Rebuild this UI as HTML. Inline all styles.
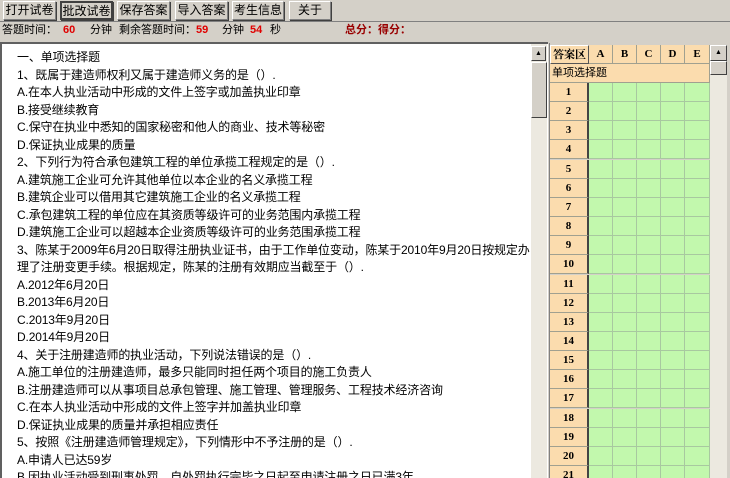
<!DOCTYPE html>
<html style="overflow:hidden;width:730px;height:478px"><head><meta charset="utf-8"><style>
*{margin:0;padding:0;box-sizing:border-box}
body{width:730px;height:478px;overflow:hidden;background:#d4d0c8;font-family:"Liberation Sans","Noto Sans CJK SC","WenQuanYi Zen Hei",sans-serif;font-size:12px;position:relative;color:#000}
.btn{position:absolute;top:1px;height:19px;border:1px solid #808080;border-top-color:#fff;border-left-color:#fff;box-shadow:1px 1px 0 #404040;text-align:center;line-height:17px;font-size:12px}
.btn.p{border:2px solid #404040}
.st{position:absolute;top:21px;left:0;width:730px;height:17px;border-top:1px solid #808080;line-height:16px;font-size:11px}
.st span{position:absolute;top:0}
.r{color:#e00000;font-weight:bold}
.dr{color:#900;font-weight:bold}
#txt{position:absolute;left:0;top:42px;width:548px;height:436px;background:#fff;border-top:2px solid #606060;border-left:2px solid #606060;overflow:hidden}
#txt .l{position:absolute;left:15px;white-space:nowrap;font-size:12px;line-height:14px;letter-spacing:-0.15px}
.sb{position:absolute;background:#ece9e0;}
.arr{position:absolute;width:15px;height:15px;background:#d4d0c8;border:1px solid #fff;border-right-color:#404040;border-bottom-color:#404040;font-size:7px;text-align:center;line-height:13px}
.thumb{position:absolute;background:#d4d0c8;border:1px solid #fff;border-right-color:#404040;border-bottom-color:#404040}
#grid{position:absolute;left:549px;top:43px;width:181px;height:435px;background:#d4d0c8;border-left:1px solid #808080;overflow:hidden}
.c{position:absolute;border-right:1px solid #a0a090;border-bottom:1px solid #a0a090}
.h{background:#fbdcae;font-family:"Liberation Serif","Noto Serif CJK SC",serif;font-weight:bold;text-align:center;font-size:11px}
.g{background:#c2f8ad;border-color:#a8c8a0}
</style></head><body>
<div class="btn" style="left:3px;width:53px">打开试卷</div>
<div class="btn p" style="left:60px;width:53px">批改试卷</div>
<div class="btn" style="left:117px;width:53px">保存答案</div>
<div class="btn" style="left:175px;width:53px">导入答案</div>
<div class="btn" style="left:232px;width:52px">考生信息</div>
<div class="btn" style="left:289px;width:42px">关于</div>
<div class="st">
<span style="left:2px">答题时间：</span><span class="r" style="left:63px">60</span><span style="left:90px">分钟</span><span style="left:119px">剩余答题时间：</span><span class="r" style="left:196px">59</span><span style="left:222px">分钟</span><span class="r" style="left:250px">54</span><span style="left:270px">秒</span><span class="dr" style="left:345px">总分：得分：</span>
</div>
<div id="txt">
<div id="lines"></div>
<div class="sb" style="left:529px;top:0;width:16px;height:436px"></div>
<div class="arr" style="left:529px;top:2px">▲</div>
<div class="thumb" style="left:529px;top:18px;width:16px;height:56px"></div>
</div>
<div id="grid">
<div class="c h" style="left:0;top:2px;width:39px;height:19px;line-height:18px;border:1px solid #555;border-top-color:#fff;border-left-color:#fff">答案区</div>
<div class="c h" style="left:39px;top:2px;width:24px;height:19px;line-height:18px">A</div>
<div class="c h" style="left:63px;top:2px;width:24px;height:19px;line-height:18px">B</div>
<div class="c h" style="left:87px;top:2px;width:24px;height:19px;line-height:18px">C</div>
<div class="c h" style="left:111px;top:2px;width:24px;height:19px;line-height:18px">D</div>
<div class="c h" style="left:135px;top:2px;width:25px;height:19px;line-height:18px">E</div>
<div class="c h" style="left:0;top:21px;width:160px;height:19px;line-height:18px;text-align:left;font-weight:normal;font-family:'Liberation Sans','Noto Sans CJK SC',sans-serif;padding-left:2px">单项选择题</div>
<div id="rows"></div>
<div class="sb" style="left:160px;top:2px;width:17px;height:433px"></div>
<div class="arr" style="left:160px;top:2px;width:17px;height:16px">▲</div>
<div class="thumb" style="left:160px;top:18px;width:17px;height:14px"></div>
</div>
<script>
var L=["一、单项选择题","1、既属于建造师权利又属于建造师义务的是（）.","A.在本人执业活动中形成的文件上签字或加盖执业印章","B.接受继续教育","C.保守在执业中悉知的国家秘密和他人的商业、技术等秘密","D.保证执业成果的质量","2、下列行为符合承包建筑工程的单位承揽工程规定的是（）.","A.建筑施工企业可允许其他单位以本企业的名义承揽工程","B.建筑企业可以借用其它建筑施工企业的名义承揽工程","C.承包建筑工程的单位应在其资质等级许可的业务范围内承揽工程","D.建筑施工企业可以超越本企业资质等级许可的业务范围承揽工程","3、陈某于2009年6月20日取得注册执业证书，由于工作单位变动，陈某于2010年9月20日按规定办","理了注册变更手续。根据规定，陈某的注册有效期应当截至于（）.","A.2012年6月20日","B.2013年6月20日","C.2013年9月20日","D.2014年9月20日","4、关于注册建造师的执业活动，下列说法错误的是（）.","A.施工单位的注册建造师，最多只能同时担任两个项目的施工负责人","B.注册建造师可以从事项目总承包管理、施工管理、管理服务、工程技术经济咨询","C.在本人执业活动中形成的文件上签字并加盖执业印章","D.保证执业成果的质量并承担相应责任","5、按照《注册建造师管理规定》，下列情形中不予注册的是（）.","A.申请人已达59岁","B.因执业活动受到刑事处罚，自处罚执行完毕之日起至申请注册之日已满3年"];
var s='';for(var k=0;k<L.length;k++)s+='<div class="l" style="top:'+(6+k*17.5)+'px">'+L[k]+'</div>';
document.getElementById('lines').outerHTML=s;
var r=document.getElementById('rows'),h='';
for(var i=0;i<21;i++){var t=40+i*19.15;
h+='<div class="c h" style="left:0;top:'+t+'px;width:39px;height:19px;line-height:18px;border-right:2px solid #444">'+(i+1)+'</div>';
for(var j=0;j<5;j++)h+='<div class="c g" style="left:'+(39+j*24)+'px;top:'+t+'px;width:'+(j==4?25:24)+'px;height:19px"></div>';}
r.outerHTML=h;
</script>
</body></html>
